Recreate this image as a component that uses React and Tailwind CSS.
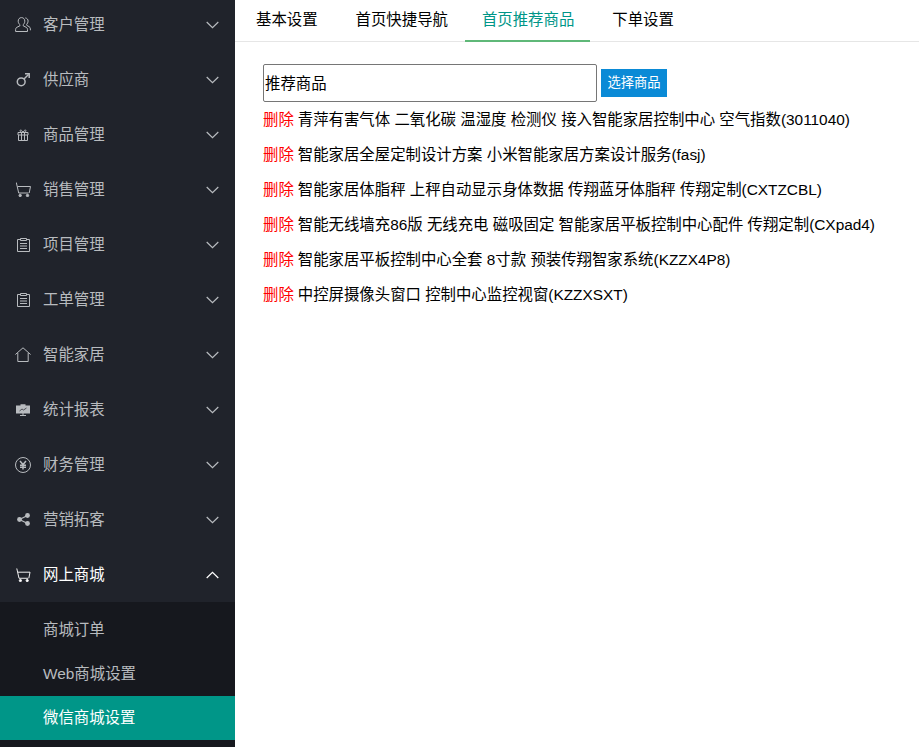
import React from "react";

const fontStack = "font-['Liberation_Sans','Noto_Sans_CJK_SC',sans-serif]";

function UserIcon() {
  return (
    <svg width="16" height="15" viewBox="0 0 16 15" fill="none" stroke="currentColor" strokeWidth="1">
      <path d="M6.500.6c2.100 0 3.300 1.600 3.300 3.600 0 1.500-.7 2.800-1.600 3.500v1.100l3 1.500c.9.500 1.300 1.200 1.300 2.200v2H.6v-2c0-1 .4-1.700 1.300-2.200l3-1.500V7.700C4 7 3.200 5.700 3.200 4.200c0-2 1.200-3.600 3.300-3.600z" />
      <path d="M10.300.9c1.800.3 2.800 1.600 2.800 3.200 0 1.300-.6 2.500-1.400 3.200v1l2.300 1.300c.9.500 1.400 1.200 1.400 2.200v1.500" />
    </svg>
  );
}

function MaleIcon() {
  return (
    <svg width="14" height="14" viewBox="0 0 14 14" fill="none" stroke="currentColor" strokeWidth="1.500">
      <circle cx="5.200" cy="8.800" r="3.900" />
      <path d="M8 6l4.500-4.500" />
      <path d="M9 .8h4.200V5" />
    </svg>
  );
}

function GiftIcon() {
  return (
    <svg width="12" height="12" viewBox="0 0 12 12" fill="none" stroke="currentColor" strokeWidth="1">
      <path d="M1 3.500h10v2.500H1zM1.500 6v5.500h9V6M4.500 3.500v8M7.500 3.500v8" />
      <path d="M6 3.500C4.500 3.500 3 2.900 3 1.700 3 .6 5 .8 6 3.500c1-2.700 3-2.900 3-1.800C9 2.900 7.500 3.500 6 3.500z" />
    </svg>
  );
}

function CartIcon({ small }) {
  return (
    <svg width="15" height={small ? 14 : 15} viewBox="0 0 15 15" fill="none" stroke="currentColor" strokeWidth="1">
      <path d="M.3.500l2.400 10.500h9.800" />
      <path d="M1.500 4.500h13l-1.300 6.500" />
      <circle cx="4.200" cy="13.500" r="1.200" fill="currentColor" />
      <circle cx="11.500" cy="13.500" r="1.200" fill="currentColor" />
    </svg>
  );
}

function ClipboardIcon() {
  return (
    <svg width="13" height="14" viewBox="0 0 13 14" fill="none" stroke="currentColor" strokeWidth="1">
      <path d="M3.500 1.500h-3v12h12v-12h-3" />
      <path d="M3.500.5h6v2h-6zM3 5.500h7M3 8h7M3 10.500h7" />
    </svg>
  );
}

function HomeIcon() {
  return (
    <svg width="16" height="15" viewBox="0 0 16 15" fill="none" stroke="currentColor" strokeWidth="1">
      <path d="M.4 7.500L8 .8l7.600 6.700" />
      <path d="M2.800 6v8.500h10.400V6" />
    </svg>
  );
}

function BoardIcon() {
  return (
    <svg width="14" height="12" viewBox="0 0 14 12" fill="currentColor">
      <path d="M0 1.500h4.500V.3h5v1.200H14V9.500H7.500V11H10v1H4v-1h2.500V9.500H0z" />
      <path d="M3.500 7l2.500-2 1.500 1 3-2" fill="none" stroke="#20232b" strokeWidth=".7" />
    </svg>
  );
}

function YenIcon() {
  return (
    <svg width="16" height="16" viewBox="0 0 16 16" fill="none" stroke="currentColor" strokeWidth="1">
      <circle cx="8" cy="8" r="7.500" />
      <path d="M5 4l3 3.500L11 4M8 7.500V12.500M5 8.200h6M5 10.200h6" strokeWidth="1.500" />
    </svg>
  );
}

function ShareIcon() {
  return (
    <svg width="13" height="13" viewBox="0 0 13 13" fill="currentColor">
      <circle cx="2.500" cy="6.500" r="2.400" />
      <circle cx="10.500" cy="2.500" r="2.400" />
      <circle cx="10.500" cy="10.500" r="2.400" />
      <path d="M2.500 6.500l8-4M2.500 6.500l8 4" stroke="currentColor" strokeWidth="1.300" />
    </svg>
  );
}

function Chevron({ up }) {
  return (
    <svg width="13" height="8" viewBox="0 0 13 8" fill="none" stroke="currentColor" strokeWidth="1.200">
      <path d={up ? "M.7 7L6.500 1.300 12.300 7" : "M.7 1l5.800 5.700L12.300 1"} />
    </svg>
  );
}

const menu = [
  { name: "客户管理", icon: <UserIcon /> },
  { name: "供应商", icon: <MaleIcon /> },
  { name: "商品管理", icon: <GiftIcon /> },
  { name: "销售管理", icon: <CartIcon /> },
  { name: "项目管理", icon: <ClipboardIcon /> },
  { name: "工单管理", icon: <ClipboardIcon /> },
  { name: "智能家居", icon: <HomeIcon /> },
  { name: "统计报表", icon: <BoardIcon /> },
  { name: "财务管理", icon: <YenIcon /> },
  { name: "营销拓客", icon: <ShareIcon /> },
];

const products = [
  "青萍有害气体 二氧化碳 温湿度 检测仪 接入智能家居控制中心 空气指数(3011040)",
  "智能家居全屋定制设计方案 小米智能家居方案设计服务(fasj)",
  "智能家居体脂秤 上秤自动显示身体数据 传翔蓝牙体脂秤 传翔定制(CXTZCBL)",
  "智能无线墙充86版 无线充电 磁吸固定 智能家居平板控制中心配件 传翔定制(CXpad4)",
  "智能家居平板控制中心全套 8寸款 预装传翔智家系统(KZZX4P8)",
  "中控屏摄像头窗口 控制中心监控视窗(KZZXSXT)",
];

function MenuRow({ item, open }) {
  return (
    <div className={"flex h-[55px] items-center pl-[15px] pr-[16px] " + (open ? "text-white" : "text-[#b8bbbf]")}>
      <span className="flex w-[16px] justify-center">{item.icon}</span>
      <span className="ml-[12px] flex-1 pt-[1px] text-[15.400px]">{item.name}</span>
      <Chevron up={open} />
    </div>
  );
}

export default function App() {
  return (
    <div className={"flex h-[747px] w-[919px] overflow-hidden bg-white " + fontStack}>
      <aside className="h-full w-[235px] shrink-0 overflow-hidden bg-[#20232b]">
        <div className="-mt-[3px]">
          {menu.map((item) => (
            <MenuRow key={item.name} item={item} />
          ))}
          <MenuRow item={{ name: "网上商城", icon: <CartIcon small /> }} open />
          <div className="bg-[#16181e] pt-[6px] text-[15.400px] text-[#b8bbbf]">
            <div className="flex h-[44px] items-center pl-[43px]">商城订单</div>
            <div className="flex h-[44px] items-center pl-[43px]">Web商城设置</div>
            <div className="flex h-[44px] items-center bg-[#009688] pl-[43px] text-white">微信商城设置</div>
            <div className="h-[10px]" />
          </div>
        </div>
      </aside>

      <main className="min-w-0 flex-1">
        <nav className="flex h-[42px] border-b border-[#e6e6e6] pl-[4px] text-[15.400px] text-black">
          <div className="flex h-[41px] items-center px-[17px] pb-[2px]">基本设置</div>
          <div className="ml-[4px] flex h-[41px] items-center px-[17px] pb-[2px]">首页快捷导航</div>
          <div className="flex h-[42px] items-center border-b-2 border-[#5fb878] pl-[17px] pr-[16px] pb-[1px] text-[#009688]">首页推荐商品</div>
          <div className="ml-[5px] flex h-[41px] items-center px-[17px] pb-[2px]">下单设置</div>
        </nav>

        <div className="pl-[28px] pt-[22px] text-[15.400px] text-black">
          <div className="flex items-center">
            <input
              readOnly
              value="推荐商品"
              className="h-[38px] w-[334px] rounded-[2px] border border-[#767676] bg-white px-[1px] pb-[2px] text-[15.400px] text-black outline-none"
            />
            <button className="ml-[4px] h-[28px] w-[66px] bg-[#0a8ad6] text-[13.300px] text-white">选择商品</button>
          </div>
          <div>
            {products.map((p) => (
              <div key={p} className="flex h-[35px] items-center whitespace-nowrap">
                <span className="mr-[4px] text-[#ff0000]">删除</span>
                {p}
              </div>
            ))}
          </div>
        </div>
      </main>
    </div>
  );
}
